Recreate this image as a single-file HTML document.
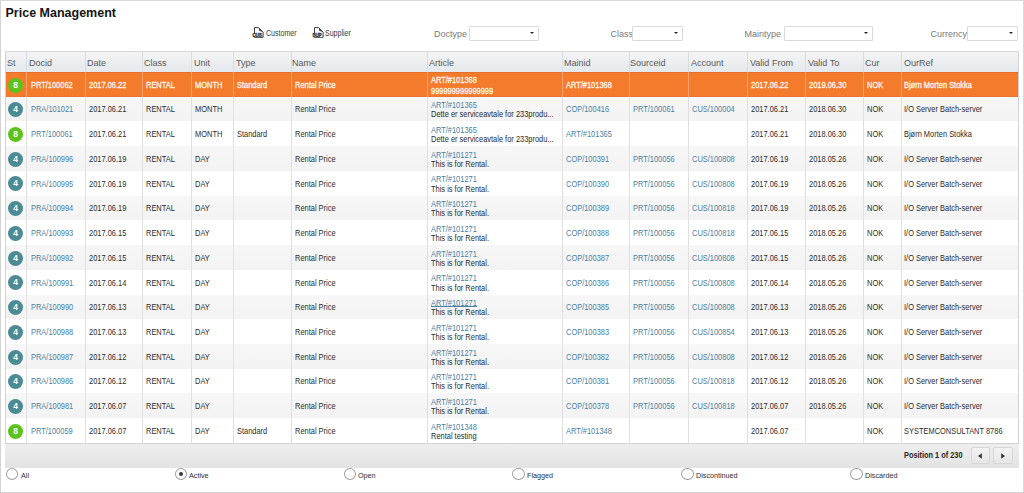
<!DOCTYPE html><html><head><meta charset="utf-8"><title>Price Management</title><style>
*{margin:0;padding:0;box-sizing:border-box}
html,body{width:1024px;height:493px;overflow:hidden;background:#fff;font-family:"Liberation Sans",sans-serif}
.a{position:absolute;white-space:nowrap;line-height:16px}
.title{font-size:12.5px;font-weight:bold;color:#151515}
.tb{font-size:8.6px;transform:scaleX(0.82);transform-origin:0 0;color:#3a3a3a}
.lbl{font-size:9px;color:#7a7a7a}
.dd{position:absolute;height:14px;border:1px solid #dadada;background:#fff;border-radius:1px}
.dd i{position:absolute;right:4px;top:4.5px;width:0;height:0;border-left:2.5px solid transparent;border-right:2.5px solid transparent;border-top:2.5px solid #222}
.hdr{font-size:9.6px;transform:scaleX(0.94);transform-origin:0 0;color:#595959}
.cell{font-size:8.2px;transform:scaleX(0.91);transform-origin:0 0;color:#2b2b2b}
.lnk{color:#4a80a2}
.sel{color:#fff5ea;-webkit-text-stroke:0.3px #fff5ea}
.badge{position:absolute;width:15px;height:15px;border-radius:50%;color:#fff;font-weight:bold;font-size:8.5px;line-height:15px;text-align:center}
.g{background:#5dc31c}
.t{background:#4c8a94}
.vl{position:absolute;width:1px}
.radio{position:absolute;width:12.4px;height:12px;border:1.2px solid #a0a0a0;border-radius:50%;background:#fff}
.rl{font-size:8px;transform:scaleX(0.9);transform-origin:0 0;color:#2e2e2e}
.pos{font-size:8.4px;transform:scaleX(0.88);transform-origin:0 0;font-weight:bold;color:#262626}
.btn{position:absolute;width:19px;height:16.5px;border:1px solid #d6d6d6;background:linear-gradient(#f3f3f3,#e6e6e6);border-radius:2px}
</style></head><body>
<div class="a" style="left:0;top:0;width:1024px;height:1px;background:#d9d9d9"></div>
<div class="a" style="left:0;top:0;width:1px;height:493px;background:#d3d3d3"></div>
<div class="a" style="left:1023px;top:0;width:1px;height:493px;background:#d9d9d9"></div>
<div class="a" style="left:0;top:492px;width:1024px;height:1px;background:#d3d3d3"></div>
<div class="a title" style="left:5.50px;top:4.90px">Price Management</div>
<svg class="a" style="left:250.5px;top:25.5px" width="14" height="13" viewBox="0 0 14 13"><path d="M3.5 1.6 H7.6 L12.1 6 V11.3 H3.5 Z" fill="#fff" stroke="#3c3c3c" stroke-width="1"/><path d="M7.8 2 L8.2 4.8 L11.6 5.9 Z" fill="#3c3c3c"/><rect x="1" y="7.3" width="10" height="3.6" fill="#fff"/><text x="6" y="10.9" font-size="4.6" text-anchor="middle" font-family="Liberation Sans" font-weight="bold" fill="none" stroke="#3a3a3a" stroke-width="0.55" letter-spacing="-0.2">CUS</text></svg>
<div class="a tb" style="left:265.50px;top:25.00px">Customer</div>
<svg class="a" style="left:310.5px;top:25.5px" width="14" height="13" viewBox="0 0 14 13"><path d="M3.5 1.6 H7.6 L12.1 6 V11.3 H3.5 Z" fill="#fff" stroke="#3c3c3c" stroke-width="1"/><path d="M7.8 2 L8.2 4.8 L11.6 5.9 Z" fill="#3c3c3c"/><rect x="1" y="7.3" width="10" height="3.6" fill="#fff"/><text x="6" y="10.9" font-size="4.6" text-anchor="middle" font-family="Liberation Sans" font-weight="bold" fill="none" stroke="#3a3a3a" stroke-width="0.55" letter-spacing="-0.2">SUP</text></svg>
<div class="a tb" style="left:325.20px;top:25.00px">Supplier</div>
<div class="a lbl" style="left:434.00px;top:25.60px">Doctype</div>
<div class="dd" style="left:468.5px;top:26.2px;width:70px;height:14.4px"><i></i></div>
<div class="a lbl" style="left:610.50px;top:25.60px">Class</div>
<div class="dd" style="left:632.3px;top:26.2px;width:50.5px;height:14.4px"><i></i></div>
<div class="a lbl" style="left:744.50px;top:25.60px">Maintype</div>
<div class="dd" style="left:784.2px;top:26.2px;width:88.4px;height:14.4px"><i></i></div>
<div class="a lbl" style="left:930.50px;top:25.60px">Currency</div>
<div class="dd" style="left:967.3px;top:26.2px;width:51px;height:14.4px"><i></i></div>
<div class="a" style="left:5px;top:51px;width:1014px;height:21px;background:linear-gradient(#f4f4f4,#e4e8ec);border-top:1px solid #d6d6d6"></div>
<div class="vl" style="left:26px;top:52px;height:20px;background:#d8dde3"></div>
<div class="vl" style="left:85px;top:52px;height:20px;background:#d8dde3"></div>
<div class="vl" style="left:142px;top:52px;height:20px;background:#d8dde3"></div>
<div class="vl" style="left:191px;top:52px;height:20px;background:#d8dde3"></div>
<div class="vl" style="left:233px;top:52px;height:20px;background:#d8dde3"></div>
<div class="vl" style="left:291px;top:52px;height:20px;background:#d8dde3"></div>
<div class="vl" style="left:427px;top:52px;height:20px;background:#d8dde3"></div>
<div class="vl" style="left:562px;top:52px;height:20px;background:#d8dde3"></div>
<div class="vl" style="left:629px;top:52px;height:20px;background:#d8dde3"></div>
<div class="vl" style="left:688px;top:52px;height:20px;background:#d8dde3"></div>
<div class="vl" style="left:747px;top:52px;height:20px;background:#d8dde3"></div>
<div class="vl" style="left:805px;top:52px;height:20px;background:#d8dde3"></div>
<div class="vl" style="left:863px;top:52px;height:20px;background:#d8dde3"></div>
<div class="vl" style="left:901px;top:52px;height:20px;background:#d8dde3"></div>
<div class="a hdr" style="left:6.60px;top:54.80px">St</div>
<div class="a hdr" style="left:28.60px;top:54.80px">Docid</div>
<div class="a hdr" style="left:86.60px;top:54.80px">Date</div>
<div class="a hdr" style="left:144.20px;top:54.80px">Class</div>
<div class="a hdr" style="left:193.60px;top:54.80px">Unit</div>
<div class="a hdr" style="left:235.60px;top:54.80px">Type</div>
<div class="a hdr" style="left:292.40px;top:54.80px">Name</div>
<div class="a hdr" style="left:428.60px;top:54.80px">Article</div>
<div class="a hdr" style="left:564.20px;top:54.80px">Mainid</div>
<div class="a hdr" style="left:630.40px;top:54.80px">Sourceid</div>
<div class="a hdr" style="left:690.60px;top:54.80px">Account</div>
<div class="a hdr" style="left:749.60px;top:54.80px">Valid From</div>
<div class="a hdr" style="left:807.60px;top:54.80px">Valid To</div>
<div class="a hdr" style="left:865.00px;top:54.80px">Cur</div>
<div class="a hdr" style="left:903.60px;top:54.80px">OurRef</div>
<div class="a" style="left:5px;top:72.00px;width:1014px;height:24.74px;background:#f47a2c"></div>
<div class="a" style="left:5px;top:72.00px;width:1014px;height:1px;background:#e2702c"></div>
<div class="a" style="left:5px;top:95.73px;width:1014px;height:1px;background:#ea7431"></div>
<div class="vl" style="left:26px;top:72.00px;height:24.74px;background:#f9a26a"></div>
<div class="vl" style="left:85px;top:72.00px;height:24.74px;background:#f9a26a"></div>
<div class="vl" style="left:142px;top:72.00px;height:24.74px;background:#f9a26a"></div>
<div class="vl" style="left:191px;top:72.00px;height:24.74px;background:#f9a26a"></div>
<div class="vl" style="left:233px;top:72.00px;height:24.74px;background:#f9a26a"></div>
<div class="vl" style="left:291px;top:72.00px;height:24.74px;background:#f9a26a"></div>
<div class="vl" style="left:427px;top:72.00px;height:24.74px;background:#f9a26a"></div>
<div class="vl" style="left:562px;top:72.00px;height:24.74px;background:#f9a26a"></div>
<div class="vl" style="left:629px;top:72.00px;height:24.74px;background:#f9a26a"></div>
<div class="vl" style="left:688px;top:72.00px;height:24.74px;background:#f9a26a"></div>
<div class="vl" style="left:747px;top:72.00px;height:24.74px;background:#f9a26a"></div>
<div class="vl" style="left:805px;top:72.00px;height:24.74px;background:#f9a26a"></div>
<div class="vl" style="left:863px;top:72.00px;height:24.74px;background:#f9a26a"></div>
<div class="vl" style="left:901px;top:72.00px;height:24.74px;background:#f9a26a"></div>
<div class="a" style="left:5px;top:96.73px;width:1014px;height:24.74px;background:linear-gradient(#f7f7f7,#f3f3f3)"></div>
<div class="vl" style="left:26px;top:96.73px;height:24.74px;background:#e0e0e0"></div>
<div class="vl" style="left:85px;top:96.73px;height:24.74px;background:#e0e0e0"></div>
<div class="vl" style="left:142px;top:96.73px;height:24.74px;background:#e0e0e0"></div>
<div class="vl" style="left:191px;top:96.73px;height:24.74px;background:#e0e0e0"></div>
<div class="vl" style="left:233px;top:96.73px;height:24.74px;background:#e0e0e0"></div>
<div class="vl" style="left:291px;top:96.73px;height:24.74px;background:#e0e0e0"></div>
<div class="vl" style="left:427px;top:96.73px;height:24.74px;background:#e0e0e0"></div>
<div class="vl" style="left:562px;top:96.73px;height:24.74px;background:#e0e0e0"></div>
<div class="vl" style="left:629px;top:96.73px;height:24.74px;background:#e0e0e0"></div>
<div class="vl" style="left:688px;top:96.73px;height:24.74px;background:#e0e0e0"></div>
<div class="vl" style="left:747px;top:96.73px;height:24.74px;background:#e0e0e0"></div>
<div class="vl" style="left:805px;top:96.73px;height:24.74px;background:#e0e0e0"></div>
<div class="vl" style="left:863px;top:96.73px;height:24.74px;background:#e0e0e0"></div>
<div class="vl" style="left:901px;top:96.73px;height:24.74px;background:#e0e0e0"></div>
<div class="a" style="left:5px;top:121.46px;width:1014px;height:24.74px;background:#ffffff"></div>
<div class="vl" style="left:26px;top:121.46px;height:24.74px;background:#e0e0e0"></div>
<div class="vl" style="left:85px;top:121.46px;height:24.74px;background:#e0e0e0"></div>
<div class="vl" style="left:142px;top:121.46px;height:24.74px;background:#e0e0e0"></div>
<div class="vl" style="left:191px;top:121.46px;height:24.74px;background:#e0e0e0"></div>
<div class="vl" style="left:233px;top:121.46px;height:24.74px;background:#e0e0e0"></div>
<div class="vl" style="left:291px;top:121.46px;height:24.74px;background:#e0e0e0"></div>
<div class="vl" style="left:427px;top:121.46px;height:24.74px;background:#e0e0e0"></div>
<div class="vl" style="left:562px;top:121.46px;height:24.74px;background:#e0e0e0"></div>
<div class="vl" style="left:629px;top:121.46px;height:24.74px;background:#e0e0e0"></div>
<div class="vl" style="left:688px;top:121.46px;height:24.74px;background:#e0e0e0"></div>
<div class="vl" style="left:747px;top:121.46px;height:24.74px;background:#e0e0e0"></div>
<div class="vl" style="left:805px;top:121.46px;height:24.74px;background:#e0e0e0"></div>
<div class="vl" style="left:863px;top:121.46px;height:24.74px;background:#e0e0e0"></div>
<div class="vl" style="left:901px;top:121.46px;height:24.74px;background:#e0e0e0"></div>
<div class="a" style="left:5px;top:146.19px;width:1014px;height:24.74px;background:linear-gradient(#f7f7f7,#f3f3f3)"></div>
<div class="vl" style="left:26px;top:146.19px;height:24.74px;background:#e0e0e0"></div>
<div class="vl" style="left:85px;top:146.19px;height:24.74px;background:#e0e0e0"></div>
<div class="vl" style="left:142px;top:146.19px;height:24.74px;background:#e0e0e0"></div>
<div class="vl" style="left:191px;top:146.19px;height:24.74px;background:#e0e0e0"></div>
<div class="vl" style="left:233px;top:146.19px;height:24.74px;background:#e0e0e0"></div>
<div class="vl" style="left:291px;top:146.19px;height:24.74px;background:#e0e0e0"></div>
<div class="vl" style="left:427px;top:146.19px;height:24.74px;background:#e0e0e0"></div>
<div class="vl" style="left:562px;top:146.19px;height:24.74px;background:#e0e0e0"></div>
<div class="vl" style="left:629px;top:146.19px;height:24.74px;background:#e0e0e0"></div>
<div class="vl" style="left:688px;top:146.19px;height:24.74px;background:#e0e0e0"></div>
<div class="vl" style="left:747px;top:146.19px;height:24.74px;background:#e0e0e0"></div>
<div class="vl" style="left:805px;top:146.19px;height:24.74px;background:#e0e0e0"></div>
<div class="vl" style="left:863px;top:146.19px;height:24.74px;background:#e0e0e0"></div>
<div class="vl" style="left:901px;top:146.19px;height:24.74px;background:#e0e0e0"></div>
<div class="a" style="left:5px;top:170.92px;width:1014px;height:24.74px;background:#ffffff"></div>
<div class="vl" style="left:26px;top:170.92px;height:24.74px;background:#e0e0e0"></div>
<div class="vl" style="left:85px;top:170.92px;height:24.74px;background:#e0e0e0"></div>
<div class="vl" style="left:142px;top:170.92px;height:24.74px;background:#e0e0e0"></div>
<div class="vl" style="left:191px;top:170.92px;height:24.74px;background:#e0e0e0"></div>
<div class="vl" style="left:233px;top:170.92px;height:24.74px;background:#e0e0e0"></div>
<div class="vl" style="left:291px;top:170.92px;height:24.74px;background:#e0e0e0"></div>
<div class="vl" style="left:427px;top:170.92px;height:24.74px;background:#e0e0e0"></div>
<div class="vl" style="left:562px;top:170.92px;height:24.74px;background:#e0e0e0"></div>
<div class="vl" style="left:629px;top:170.92px;height:24.74px;background:#e0e0e0"></div>
<div class="vl" style="left:688px;top:170.92px;height:24.74px;background:#e0e0e0"></div>
<div class="vl" style="left:747px;top:170.92px;height:24.74px;background:#e0e0e0"></div>
<div class="vl" style="left:805px;top:170.92px;height:24.74px;background:#e0e0e0"></div>
<div class="vl" style="left:863px;top:170.92px;height:24.74px;background:#e0e0e0"></div>
<div class="vl" style="left:901px;top:170.92px;height:24.74px;background:#e0e0e0"></div>
<div class="a" style="left:5px;top:195.65px;width:1014px;height:24.74px;background:linear-gradient(#f7f7f7,#f3f3f3)"></div>
<div class="vl" style="left:26px;top:195.65px;height:24.74px;background:#e0e0e0"></div>
<div class="vl" style="left:85px;top:195.65px;height:24.74px;background:#e0e0e0"></div>
<div class="vl" style="left:142px;top:195.65px;height:24.74px;background:#e0e0e0"></div>
<div class="vl" style="left:191px;top:195.65px;height:24.74px;background:#e0e0e0"></div>
<div class="vl" style="left:233px;top:195.65px;height:24.74px;background:#e0e0e0"></div>
<div class="vl" style="left:291px;top:195.65px;height:24.74px;background:#e0e0e0"></div>
<div class="vl" style="left:427px;top:195.65px;height:24.74px;background:#e0e0e0"></div>
<div class="vl" style="left:562px;top:195.65px;height:24.74px;background:#e0e0e0"></div>
<div class="vl" style="left:629px;top:195.65px;height:24.74px;background:#e0e0e0"></div>
<div class="vl" style="left:688px;top:195.65px;height:24.74px;background:#e0e0e0"></div>
<div class="vl" style="left:747px;top:195.65px;height:24.74px;background:#e0e0e0"></div>
<div class="vl" style="left:805px;top:195.65px;height:24.74px;background:#e0e0e0"></div>
<div class="vl" style="left:863px;top:195.65px;height:24.74px;background:#e0e0e0"></div>
<div class="vl" style="left:901px;top:195.65px;height:24.74px;background:#e0e0e0"></div>
<div class="a" style="left:5px;top:220.38px;width:1014px;height:24.74px;background:#ffffff"></div>
<div class="vl" style="left:26px;top:220.38px;height:24.74px;background:#e0e0e0"></div>
<div class="vl" style="left:85px;top:220.38px;height:24.74px;background:#e0e0e0"></div>
<div class="vl" style="left:142px;top:220.38px;height:24.74px;background:#e0e0e0"></div>
<div class="vl" style="left:191px;top:220.38px;height:24.74px;background:#e0e0e0"></div>
<div class="vl" style="left:233px;top:220.38px;height:24.74px;background:#e0e0e0"></div>
<div class="vl" style="left:291px;top:220.38px;height:24.74px;background:#e0e0e0"></div>
<div class="vl" style="left:427px;top:220.38px;height:24.74px;background:#e0e0e0"></div>
<div class="vl" style="left:562px;top:220.38px;height:24.74px;background:#e0e0e0"></div>
<div class="vl" style="left:629px;top:220.38px;height:24.74px;background:#e0e0e0"></div>
<div class="vl" style="left:688px;top:220.38px;height:24.74px;background:#e0e0e0"></div>
<div class="vl" style="left:747px;top:220.38px;height:24.74px;background:#e0e0e0"></div>
<div class="vl" style="left:805px;top:220.38px;height:24.74px;background:#e0e0e0"></div>
<div class="vl" style="left:863px;top:220.38px;height:24.74px;background:#e0e0e0"></div>
<div class="vl" style="left:901px;top:220.38px;height:24.74px;background:#e0e0e0"></div>
<div class="a" style="left:5px;top:245.11px;width:1014px;height:24.74px;background:linear-gradient(#f7f7f7,#f3f3f3)"></div>
<div class="vl" style="left:26px;top:245.11px;height:24.74px;background:#e0e0e0"></div>
<div class="vl" style="left:85px;top:245.11px;height:24.74px;background:#e0e0e0"></div>
<div class="vl" style="left:142px;top:245.11px;height:24.74px;background:#e0e0e0"></div>
<div class="vl" style="left:191px;top:245.11px;height:24.74px;background:#e0e0e0"></div>
<div class="vl" style="left:233px;top:245.11px;height:24.74px;background:#e0e0e0"></div>
<div class="vl" style="left:291px;top:245.11px;height:24.74px;background:#e0e0e0"></div>
<div class="vl" style="left:427px;top:245.11px;height:24.74px;background:#e0e0e0"></div>
<div class="vl" style="left:562px;top:245.11px;height:24.74px;background:#e0e0e0"></div>
<div class="vl" style="left:629px;top:245.11px;height:24.74px;background:#e0e0e0"></div>
<div class="vl" style="left:688px;top:245.11px;height:24.74px;background:#e0e0e0"></div>
<div class="vl" style="left:747px;top:245.11px;height:24.74px;background:#e0e0e0"></div>
<div class="vl" style="left:805px;top:245.11px;height:24.74px;background:#e0e0e0"></div>
<div class="vl" style="left:863px;top:245.11px;height:24.74px;background:#e0e0e0"></div>
<div class="vl" style="left:901px;top:245.11px;height:24.74px;background:#e0e0e0"></div>
<div class="a" style="left:5px;top:269.84px;width:1014px;height:24.74px;background:#ffffff"></div>
<div class="vl" style="left:26px;top:269.84px;height:24.74px;background:#e0e0e0"></div>
<div class="vl" style="left:85px;top:269.84px;height:24.74px;background:#e0e0e0"></div>
<div class="vl" style="left:142px;top:269.84px;height:24.74px;background:#e0e0e0"></div>
<div class="vl" style="left:191px;top:269.84px;height:24.74px;background:#e0e0e0"></div>
<div class="vl" style="left:233px;top:269.84px;height:24.74px;background:#e0e0e0"></div>
<div class="vl" style="left:291px;top:269.84px;height:24.74px;background:#e0e0e0"></div>
<div class="vl" style="left:427px;top:269.84px;height:24.74px;background:#e0e0e0"></div>
<div class="vl" style="left:562px;top:269.84px;height:24.74px;background:#e0e0e0"></div>
<div class="vl" style="left:629px;top:269.84px;height:24.74px;background:#e0e0e0"></div>
<div class="vl" style="left:688px;top:269.84px;height:24.74px;background:#e0e0e0"></div>
<div class="vl" style="left:747px;top:269.84px;height:24.74px;background:#e0e0e0"></div>
<div class="vl" style="left:805px;top:269.84px;height:24.74px;background:#e0e0e0"></div>
<div class="vl" style="left:863px;top:269.84px;height:24.74px;background:#e0e0e0"></div>
<div class="vl" style="left:901px;top:269.84px;height:24.74px;background:#e0e0e0"></div>
<div class="a" style="left:5px;top:294.57px;width:1014px;height:24.74px;background:linear-gradient(#f7f7f7,#f3f3f3)"></div>
<div class="vl" style="left:26px;top:294.57px;height:24.74px;background:#e0e0e0"></div>
<div class="vl" style="left:85px;top:294.57px;height:24.74px;background:#e0e0e0"></div>
<div class="vl" style="left:142px;top:294.57px;height:24.74px;background:#e0e0e0"></div>
<div class="vl" style="left:191px;top:294.57px;height:24.74px;background:#e0e0e0"></div>
<div class="vl" style="left:233px;top:294.57px;height:24.74px;background:#e0e0e0"></div>
<div class="vl" style="left:291px;top:294.57px;height:24.74px;background:#e0e0e0"></div>
<div class="vl" style="left:427px;top:294.57px;height:24.74px;background:#e0e0e0"></div>
<div class="vl" style="left:562px;top:294.57px;height:24.74px;background:#e0e0e0"></div>
<div class="vl" style="left:629px;top:294.57px;height:24.74px;background:#e0e0e0"></div>
<div class="vl" style="left:688px;top:294.57px;height:24.74px;background:#e0e0e0"></div>
<div class="vl" style="left:747px;top:294.57px;height:24.74px;background:#e0e0e0"></div>
<div class="vl" style="left:805px;top:294.57px;height:24.74px;background:#e0e0e0"></div>
<div class="vl" style="left:863px;top:294.57px;height:24.74px;background:#e0e0e0"></div>
<div class="vl" style="left:901px;top:294.57px;height:24.74px;background:#e0e0e0"></div>
<div class="a" style="left:5px;top:319.30px;width:1014px;height:24.74px;background:#ffffff"></div>
<div class="vl" style="left:26px;top:319.30px;height:24.74px;background:#e0e0e0"></div>
<div class="vl" style="left:85px;top:319.30px;height:24.74px;background:#e0e0e0"></div>
<div class="vl" style="left:142px;top:319.30px;height:24.74px;background:#e0e0e0"></div>
<div class="vl" style="left:191px;top:319.30px;height:24.74px;background:#e0e0e0"></div>
<div class="vl" style="left:233px;top:319.30px;height:24.74px;background:#e0e0e0"></div>
<div class="vl" style="left:291px;top:319.30px;height:24.74px;background:#e0e0e0"></div>
<div class="vl" style="left:427px;top:319.30px;height:24.74px;background:#e0e0e0"></div>
<div class="vl" style="left:562px;top:319.30px;height:24.74px;background:#e0e0e0"></div>
<div class="vl" style="left:629px;top:319.30px;height:24.74px;background:#e0e0e0"></div>
<div class="vl" style="left:688px;top:319.30px;height:24.74px;background:#e0e0e0"></div>
<div class="vl" style="left:747px;top:319.30px;height:24.74px;background:#e0e0e0"></div>
<div class="vl" style="left:805px;top:319.30px;height:24.74px;background:#e0e0e0"></div>
<div class="vl" style="left:863px;top:319.30px;height:24.74px;background:#e0e0e0"></div>
<div class="vl" style="left:901px;top:319.30px;height:24.74px;background:#e0e0e0"></div>
<div class="a" style="left:5px;top:344.03px;width:1014px;height:24.74px;background:linear-gradient(#f7f7f7,#f3f3f3)"></div>
<div class="vl" style="left:26px;top:344.03px;height:24.74px;background:#e0e0e0"></div>
<div class="vl" style="left:85px;top:344.03px;height:24.74px;background:#e0e0e0"></div>
<div class="vl" style="left:142px;top:344.03px;height:24.74px;background:#e0e0e0"></div>
<div class="vl" style="left:191px;top:344.03px;height:24.74px;background:#e0e0e0"></div>
<div class="vl" style="left:233px;top:344.03px;height:24.74px;background:#e0e0e0"></div>
<div class="vl" style="left:291px;top:344.03px;height:24.74px;background:#e0e0e0"></div>
<div class="vl" style="left:427px;top:344.03px;height:24.74px;background:#e0e0e0"></div>
<div class="vl" style="left:562px;top:344.03px;height:24.74px;background:#e0e0e0"></div>
<div class="vl" style="left:629px;top:344.03px;height:24.74px;background:#e0e0e0"></div>
<div class="vl" style="left:688px;top:344.03px;height:24.74px;background:#e0e0e0"></div>
<div class="vl" style="left:747px;top:344.03px;height:24.74px;background:#e0e0e0"></div>
<div class="vl" style="left:805px;top:344.03px;height:24.74px;background:#e0e0e0"></div>
<div class="vl" style="left:863px;top:344.03px;height:24.74px;background:#e0e0e0"></div>
<div class="vl" style="left:901px;top:344.03px;height:24.74px;background:#e0e0e0"></div>
<div class="a" style="left:5px;top:368.76px;width:1014px;height:24.74px;background:#ffffff"></div>
<div class="vl" style="left:26px;top:368.76px;height:24.74px;background:#e0e0e0"></div>
<div class="vl" style="left:85px;top:368.76px;height:24.74px;background:#e0e0e0"></div>
<div class="vl" style="left:142px;top:368.76px;height:24.74px;background:#e0e0e0"></div>
<div class="vl" style="left:191px;top:368.76px;height:24.74px;background:#e0e0e0"></div>
<div class="vl" style="left:233px;top:368.76px;height:24.74px;background:#e0e0e0"></div>
<div class="vl" style="left:291px;top:368.76px;height:24.74px;background:#e0e0e0"></div>
<div class="vl" style="left:427px;top:368.76px;height:24.74px;background:#e0e0e0"></div>
<div class="vl" style="left:562px;top:368.76px;height:24.74px;background:#e0e0e0"></div>
<div class="vl" style="left:629px;top:368.76px;height:24.74px;background:#e0e0e0"></div>
<div class="vl" style="left:688px;top:368.76px;height:24.74px;background:#e0e0e0"></div>
<div class="vl" style="left:747px;top:368.76px;height:24.74px;background:#e0e0e0"></div>
<div class="vl" style="left:805px;top:368.76px;height:24.74px;background:#e0e0e0"></div>
<div class="vl" style="left:863px;top:368.76px;height:24.74px;background:#e0e0e0"></div>
<div class="vl" style="left:901px;top:368.76px;height:24.74px;background:#e0e0e0"></div>
<div class="a" style="left:5px;top:393.49px;width:1014px;height:24.74px;background:linear-gradient(#f7f7f7,#f3f3f3)"></div>
<div class="vl" style="left:26px;top:393.49px;height:24.74px;background:#e0e0e0"></div>
<div class="vl" style="left:85px;top:393.49px;height:24.74px;background:#e0e0e0"></div>
<div class="vl" style="left:142px;top:393.49px;height:24.74px;background:#e0e0e0"></div>
<div class="vl" style="left:191px;top:393.49px;height:24.74px;background:#e0e0e0"></div>
<div class="vl" style="left:233px;top:393.49px;height:24.74px;background:#e0e0e0"></div>
<div class="vl" style="left:291px;top:393.49px;height:24.74px;background:#e0e0e0"></div>
<div class="vl" style="left:427px;top:393.49px;height:24.74px;background:#e0e0e0"></div>
<div class="vl" style="left:562px;top:393.49px;height:24.74px;background:#e0e0e0"></div>
<div class="vl" style="left:629px;top:393.49px;height:24.74px;background:#e0e0e0"></div>
<div class="vl" style="left:688px;top:393.49px;height:24.74px;background:#e0e0e0"></div>
<div class="vl" style="left:747px;top:393.49px;height:24.74px;background:#e0e0e0"></div>
<div class="vl" style="left:805px;top:393.49px;height:24.74px;background:#e0e0e0"></div>
<div class="vl" style="left:863px;top:393.49px;height:24.74px;background:#e0e0e0"></div>
<div class="vl" style="left:901px;top:393.49px;height:24.74px;background:#e0e0e0"></div>
<div class="a" style="left:5px;top:418.22px;width:1014px;height:24.74px;background:#ffffff"></div>
<div class="vl" style="left:26px;top:418.22px;height:24.74px;background:#e0e0e0"></div>
<div class="vl" style="left:85px;top:418.22px;height:24.74px;background:#e0e0e0"></div>
<div class="vl" style="left:142px;top:418.22px;height:24.74px;background:#e0e0e0"></div>
<div class="vl" style="left:191px;top:418.22px;height:24.74px;background:#e0e0e0"></div>
<div class="vl" style="left:233px;top:418.22px;height:24.74px;background:#e0e0e0"></div>
<div class="vl" style="left:291px;top:418.22px;height:24.74px;background:#e0e0e0"></div>
<div class="vl" style="left:427px;top:418.22px;height:24.74px;background:#e0e0e0"></div>
<div class="vl" style="left:562px;top:418.22px;height:24.74px;background:#e0e0e0"></div>
<div class="vl" style="left:629px;top:418.22px;height:24.74px;background:#e0e0e0"></div>
<div class="vl" style="left:688px;top:418.22px;height:24.74px;background:#e0e0e0"></div>
<div class="vl" style="left:747px;top:418.22px;height:24.74px;background:#e0e0e0"></div>
<div class="vl" style="left:805px;top:418.22px;height:24.74px;background:#e0e0e0"></div>
<div class="vl" style="left:863px;top:418.22px;height:24.74px;background:#e0e0e0"></div>
<div class="vl" style="left:901px;top:418.22px;height:24.74px;background:#e0e0e0"></div>
<div class="vl" style="left:5px;top:51px;height:416.50px;background:#d2d2d2"></div>
<div class="vl" style="left:1018px;top:51px;height:416.50px;background:#d2d2d2"></div>
<div class="badge g" style="left:8.2px;top:77.56px">8</div>
<div class="a cell sel" style="left:31.20px;top:77.66px">PRT/100062</div>
<div class="a cell sel" style="left:89.00px;top:77.66px">2017.06.22</div>
<div class="a cell sel" style="left:146.20px;top:77.66px">RENTAL</div>
<div class="a cell sel" style="left:195.20px;top:77.66px">MONTH</div>
<div class="a cell sel" style="left:237.20px;top:77.66px">Standard</div>
<div class="a cell sel" style="left:295.20px;top:77.66px">Rental Price</div>
<div class="a cell sel" style="left:566.20px;top:77.66px">ART/#101368</div>
<div class="a cell sel" style="left:751.20px;top:77.66px">2017.06.22</div>
<div class="a cell sel" style="left:809.20px;top:77.66px">2019.06.30</div>
<div class="a cell sel" style="left:867.00px;top:77.66px">NOK</div>
<div class="a cell sel" style="left:904.20px;top:77.66px">Bjørn Morten Stokka</div>
<div class="a cell sel" style="left:431.00px;top:73.46px">ART/#101368</div>
<div class="a cell sel" style="left:431.00px;top:84.16px">999999999999999</div>
<div class="badge t" style="left:8.2px;top:102.30px">4</div>
<div class="a cell lnk" style="left:31.20px;top:102.39px">PRA/101021</div>
<div class="a cell" style="left:89.00px;top:102.39px">2017.06.21</div>
<div class="a cell" style="left:146.20px;top:102.39px">RENTAL</div>
<div class="a cell" style="left:195.20px;top:102.39px">MONTH</div>
<div class="a cell" style="left:295.20px;top:102.39px">Rental Price</div>
<div class="a cell lnk" style="left:566.20px;top:102.39px">COP/100416</div>
<div class="a cell lnk" style="left:633.20px;top:102.39px">PRT/100061</div>
<div class="a cell lnk" style="left:692.20px;top:102.39px">CUS/100004</div>
<div class="a cell" style="left:751.20px;top:102.39px">2017.06.21</div>
<div class="a cell" style="left:809.20px;top:102.39px">2018.06.30</div>
<div class="a cell" style="left:867.00px;top:102.39px">NOK</div>
<div class="a cell" style="left:904.20px;top:102.39px">I/O Server Batch-server</div>
<div class="a cell lnk" style="left:431.00px;top:98.19px">ART/#101365</div>
<div class="a cell" style="left:431.00px;top:107.39px">Dette er serviceavtale for 233produ...</div>
<div class="badge g" style="left:8.2px;top:127.03px">8</div>
<div class="a cell lnk" style="left:31.20px;top:127.13px">PRT/100061</div>
<div class="a cell" style="left:89.00px;top:127.13px">2017.06.21</div>
<div class="a cell" style="left:146.20px;top:127.13px">RENTAL</div>
<div class="a cell" style="left:195.20px;top:127.13px">MONTH</div>
<div class="a cell" style="left:237.20px;top:127.13px">Standard</div>
<div class="a cell" style="left:295.20px;top:127.13px">Rental Price</div>
<div class="a cell lnk" style="left:566.20px;top:127.13px">ART/#101365</div>
<div class="a cell" style="left:751.20px;top:127.13px">2017.06.21</div>
<div class="a cell" style="left:809.20px;top:127.13px">2018.06.30</div>
<div class="a cell" style="left:867.00px;top:127.13px">NOK</div>
<div class="a cell" style="left:904.20px;top:127.13px">Bjørn Morten Stokka</div>
<div class="a cell lnk" style="left:431.00px;top:122.93px">ART/#101365</div>
<div class="a cell" style="left:431.00px;top:132.13px">Dette er serviceavtale for 233produ...</div>
<div class="badge t" style="left:8.2px;top:151.75px">4</div>
<div class="a cell lnk" style="left:31.20px;top:151.86px">PRA/100996</div>
<div class="a cell" style="left:89.00px;top:151.86px">2017.06.19</div>
<div class="a cell" style="left:146.20px;top:151.86px">RENTAL</div>
<div class="a cell" style="left:195.20px;top:151.86px">DAY</div>
<div class="a cell" style="left:295.20px;top:151.86px">Rental Price</div>
<div class="a cell lnk" style="left:566.20px;top:151.86px">COP/100391</div>
<div class="a cell lnk" style="left:633.20px;top:151.86px">PRT/100056</div>
<div class="a cell lnk" style="left:692.20px;top:151.86px">CUS/100808</div>
<div class="a cell" style="left:751.20px;top:151.86px">2017.06.19</div>
<div class="a cell" style="left:809.20px;top:151.86px">2018.05.26</div>
<div class="a cell" style="left:867.00px;top:151.86px">NOK</div>
<div class="a cell" style="left:904.20px;top:151.86px">I/O Server Batch-server</div>
<div class="a cell lnk" style="left:431.00px;top:147.66px">ART/#101271</div>
<div class="a cell" style="left:431.00px;top:156.86px">This is for Rental.</div>
<div class="badge t" style="left:8.2px;top:176.49px">4</div>
<div class="a cell lnk" style="left:31.20px;top:176.59px">PRA/100995</div>
<div class="a cell" style="left:89.00px;top:176.59px">2017.06.19</div>
<div class="a cell" style="left:146.20px;top:176.59px">RENTAL</div>
<div class="a cell" style="left:195.20px;top:176.59px">DAY</div>
<div class="a cell" style="left:295.20px;top:176.59px">Rental Price</div>
<div class="a cell lnk" style="left:566.20px;top:176.59px">COP/100390</div>
<div class="a cell lnk" style="left:633.20px;top:176.59px">PRT/100056</div>
<div class="a cell lnk" style="left:692.20px;top:176.59px">CUS/100808</div>
<div class="a cell" style="left:751.20px;top:176.59px">2017.06.19</div>
<div class="a cell" style="left:809.20px;top:176.59px">2018.05.26</div>
<div class="a cell" style="left:867.00px;top:176.59px">NOK</div>
<div class="a cell" style="left:904.20px;top:176.59px">I/O Server Batch-server</div>
<div class="a cell lnk" style="left:431.00px;top:172.39px">ART/#101271</div>
<div class="a cell" style="left:431.00px;top:181.59px">This is for Rental.</div>
<div class="badge t" style="left:8.2px;top:201.22px">4</div>
<div class="a cell lnk" style="left:31.20px;top:201.32px">PRA/100994</div>
<div class="a cell" style="left:89.00px;top:201.32px">2017.06.19</div>
<div class="a cell" style="left:146.20px;top:201.32px">RENTAL</div>
<div class="a cell" style="left:195.20px;top:201.32px">DAY</div>
<div class="a cell" style="left:295.20px;top:201.32px">Rental Price</div>
<div class="a cell lnk" style="left:566.20px;top:201.32px">COP/100389</div>
<div class="a cell lnk" style="left:633.20px;top:201.32px">PRT/100056</div>
<div class="a cell lnk" style="left:692.20px;top:201.32px">CUS/100818</div>
<div class="a cell" style="left:751.20px;top:201.32px">2017.06.19</div>
<div class="a cell" style="left:809.20px;top:201.32px">2018.05.26</div>
<div class="a cell" style="left:867.00px;top:201.32px">NOK</div>
<div class="a cell" style="left:904.20px;top:201.32px">I/O Server Batch-server</div>
<div class="a cell lnk" style="left:431.00px;top:197.12px">ART/#101271</div>
<div class="a cell" style="left:431.00px;top:206.32px">This is for Rental.</div>
<div class="badge t" style="left:8.2px;top:225.94px">4</div>
<div class="a cell lnk" style="left:31.20px;top:226.05px">PRA/100993</div>
<div class="a cell" style="left:89.00px;top:226.05px">2017.06.15</div>
<div class="a cell" style="left:146.20px;top:226.05px">RENTAL</div>
<div class="a cell" style="left:195.20px;top:226.05px">DAY</div>
<div class="a cell" style="left:295.20px;top:226.05px">Rental Price</div>
<div class="a cell lnk" style="left:566.20px;top:226.05px">COP/100388</div>
<div class="a cell lnk" style="left:633.20px;top:226.05px">PRT/100056</div>
<div class="a cell lnk" style="left:692.20px;top:226.05px">CUS/100818</div>
<div class="a cell" style="left:751.20px;top:226.05px">2017.06.15</div>
<div class="a cell" style="left:809.20px;top:226.05px">2018.05.26</div>
<div class="a cell" style="left:867.00px;top:226.05px">NOK</div>
<div class="a cell" style="left:904.20px;top:226.05px">I/O Server Batch-server</div>
<div class="a cell lnk" style="left:431.00px;top:221.85px">ART/#101271</div>
<div class="a cell" style="left:431.00px;top:231.05px">This is for Rental.</div>
<div class="badge t" style="left:8.2px;top:250.68px">4</div>
<div class="a cell lnk" style="left:31.20px;top:250.78px">PRA/100992</div>
<div class="a cell" style="left:89.00px;top:250.78px">2017.06.15</div>
<div class="a cell" style="left:146.20px;top:250.78px">RENTAL</div>
<div class="a cell" style="left:195.20px;top:250.78px">DAY</div>
<div class="a cell" style="left:295.20px;top:250.78px">Rental Price</div>
<div class="a cell lnk" style="left:566.20px;top:250.78px">COP/100387</div>
<div class="a cell lnk" style="left:633.20px;top:250.78px">PRT/100056</div>
<div class="a cell lnk" style="left:692.20px;top:250.78px">CUS/100808</div>
<div class="a cell" style="left:751.20px;top:250.78px">2017.06.15</div>
<div class="a cell" style="left:809.20px;top:250.78px">2018.05.26</div>
<div class="a cell" style="left:867.00px;top:250.78px">NOK</div>
<div class="a cell" style="left:904.20px;top:250.78px">I/O Server Batch-server</div>
<div class="a cell lnk" style="left:431.00px;top:246.58px">ART/#101271</div>
<div class="a cell" style="left:431.00px;top:255.78px">This is for Rental.</div>
<div class="badge t" style="left:8.2px;top:275.41px">4</div>
<div class="a cell lnk" style="left:31.20px;top:275.51px">PRA/100991</div>
<div class="a cell" style="left:89.00px;top:275.51px">2017.06.14</div>
<div class="a cell" style="left:146.20px;top:275.51px">RENTAL</div>
<div class="a cell" style="left:195.20px;top:275.51px">DAY</div>
<div class="a cell" style="left:295.20px;top:275.51px">Rental Price</div>
<div class="a cell lnk" style="left:566.20px;top:275.51px">COP/100386</div>
<div class="a cell lnk" style="left:633.20px;top:275.51px">PRT/100056</div>
<div class="a cell lnk" style="left:692.20px;top:275.51px">CUS/100808</div>
<div class="a cell" style="left:751.20px;top:275.51px">2017.06.14</div>
<div class="a cell" style="left:809.20px;top:275.51px">2018.05.26</div>
<div class="a cell" style="left:867.00px;top:275.51px">NOK</div>
<div class="a cell" style="left:904.20px;top:275.51px">I/O Server Batch-server</div>
<div class="a cell lnk" style="left:431.00px;top:271.31px">ART/#101271</div>
<div class="a cell" style="left:431.00px;top:280.51px">This is for Rental.</div>
<div class="badge t" style="left:8.2px;top:300.13px">4</div>
<div class="a cell lnk" style="left:31.20px;top:300.24px">PRA/100990</div>
<div class="a cell" style="left:89.00px;top:300.24px">2017.06.13</div>
<div class="a cell" style="left:146.20px;top:300.24px">RENTAL</div>
<div class="a cell" style="left:195.20px;top:300.24px">DAY</div>
<div class="a cell" style="left:295.20px;top:300.24px">Rental Price</div>
<div class="a cell lnk" style="left:566.20px;top:300.24px">COP/100385</div>
<div class="a cell lnk" style="left:633.20px;top:300.24px">PRT/100056</div>
<div class="a cell lnk" style="left:692.20px;top:300.24px">CUS/100808</div>
<div class="a cell" style="left:751.20px;top:300.24px">2017.06.13</div>
<div class="a cell" style="left:809.20px;top:300.24px">2018.05.26</div>
<div class="a cell" style="left:867.00px;top:300.24px">NOK</div>
<div class="a cell" style="left:904.20px;top:300.24px">I/O Server Batch-server</div>
<div class="a cell lnk" style="left:431.00px;top:296.04px;text-decoration:underline;text-underline-offset:0px;text-decoration-thickness:0.8px">ART/#101271</div>
<div class="a cell" style="left:431.00px;top:305.24px">This is for Rental.</div>
<div class="badge t" style="left:8.2px;top:324.87px">4</div>
<div class="a cell lnk" style="left:31.20px;top:324.97px">PRA/100988</div>
<div class="a cell" style="left:89.00px;top:324.97px">2017.06.13</div>
<div class="a cell" style="left:146.20px;top:324.97px">RENTAL</div>
<div class="a cell" style="left:195.20px;top:324.97px">DAY</div>
<div class="a cell" style="left:295.20px;top:324.97px">Rental Price</div>
<div class="a cell lnk" style="left:566.20px;top:324.97px">COP/100383</div>
<div class="a cell lnk" style="left:633.20px;top:324.97px">PRT/100056</div>
<div class="a cell lnk" style="left:692.20px;top:324.97px">CUS/100854</div>
<div class="a cell" style="left:751.20px;top:324.97px">2017.06.13</div>
<div class="a cell" style="left:809.20px;top:324.97px">2018.05.26</div>
<div class="a cell" style="left:867.00px;top:324.97px">NOK</div>
<div class="a cell" style="left:904.20px;top:324.97px">I/O Server Batch-server</div>
<div class="a cell lnk" style="left:431.00px;top:320.77px">ART/#101271</div>
<div class="a cell" style="left:431.00px;top:329.97px">This is for Rental.</div>
<div class="badge t" style="left:8.2px;top:349.60px">4</div>
<div class="a cell lnk" style="left:31.20px;top:349.70px">PRA/100987</div>
<div class="a cell" style="left:89.00px;top:349.70px">2017.06.12</div>
<div class="a cell" style="left:146.20px;top:349.70px">RENTAL</div>
<div class="a cell" style="left:195.20px;top:349.70px">DAY</div>
<div class="a cell" style="left:295.20px;top:349.70px">Rental Price</div>
<div class="a cell lnk" style="left:566.20px;top:349.70px">COP/100382</div>
<div class="a cell lnk" style="left:633.20px;top:349.70px">PRT/100056</div>
<div class="a cell lnk" style="left:692.20px;top:349.70px">CUS/100808</div>
<div class="a cell" style="left:751.20px;top:349.70px">2017.06.12</div>
<div class="a cell" style="left:809.20px;top:349.70px">2018.05.26</div>
<div class="a cell" style="left:867.00px;top:349.70px">NOK</div>
<div class="a cell" style="left:904.20px;top:349.70px">I/O Server Batch-server</div>
<div class="a cell lnk" style="left:431.00px;top:345.50px">ART/#101271</div>
<div class="a cell" style="left:431.00px;top:354.70px">This is for Rental.</div>
<div class="badge t" style="left:8.2px;top:374.32px">4</div>
<div class="a cell lnk" style="left:31.20px;top:374.43px">PRA/100986</div>
<div class="a cell" style="left:89.00px;top:374.43px">2017.06.12</div>
<div class="a cell" style="left:146.20px;top:374.43px">RENTAL</div>
<div class="a cell" style="left:195.20px;top:374.43px">DAY</div>
<div class="a cell" style="left:295.20px;top:374.43px">Rental Price</div>
<div class="a cell lnk" style="left:566.20px;top:374.43px">COP/100381</div>
<div class="a cell lnk" style="left:633.20px;top:374.43px">PRT/100056</div>
<div class="a cell lnk" style="left:692.20px;top:374.43px">CUS/100818</div>
<div class="a cell" style="left:751.20px;top:374.43px">2017.06.12</div>
<div class="a cell" style="left:809.20px;top:374.43px">2018.05.26</div>
<div class="a cell" style="left:867.00px;top:374.43px">NOK</div>
<div class="a cell" style="left:904.20px;top:374.43px">I/O Server Batch-server</div>
<div class="a cell lnk" style="left:431.00px;top:370.23px">ART/#101271</div>
<div class="a cell" style="left:431.00px;top:379.43px">This is for Rental.</div>
<div class="badge t" style="left:8.2px;top:399.06px">4</div>
<div class="a cell lnk" style="left:31.20px;top:399.16px">PRA/100981</div>
<div class="a cell" style="left:89.00px;top:399.16px">2017.06.07</div>
<div class="a cell" style="left:146.20px;top:399.16px">RENTAL</div>
<div class="a cell" style="left:195.20px;top:399.16px">DAY</div>
<div class="a cell" style="left:295.20px;top:399.16px">Rental Price</div>
<div class="a cell lnk" style="left:566.20px;top:399.16px">COP/100378</div>
<div class="a cell lnk" style="left:633.20px;top:399.16px">PRT/100056</div>
<div class="a cell lnk" style="left:692.20px;top:399.16px">CUS/100818</div>
<div class="a cell" style="left:751.20px;top:399.16px">2017.06.07</div>
<div class="a cell" style="left:809.20px;top:399.16px">2018.05.26</div>
<div class="a cell" style="left:867.00px;top:399.16px">NOK</div>
<div class="a cell" style="left:904.20px;top:399.16px">I/O Server Batch-server</div>
<div class="a cell lnk" style="left:431.00px;top:394.96px">ART/#101271</div>
<div class="a cell" style="left:431.00px;top:404.16px">This is for Rental.</div>
<div class="badge g" style="left:8.2px;top:423.79px">8</div>
<div class="a cell lnk" style="left:31.20px;top:423.89px">PRT/100059</div>
<div class="a cell" style="left:89.00px;top:423.89px">2017.06.07</div>
<div class="a cell" style="left:146.20px;top:423.89px">RENTAL</div>
<div class="a cell" style="left:195.20px;top:423.89px">DAY</div>
<div class="a cell" style="left:237.20px;top:423.89px">Standard</div>
<div class="a cell" style="left:295.20px;top:423.89px">Rental Price</div>
<div class="a cell lnk" style="left:566.20px;top:423.89px">ART/#101348</div>
<div class="a cell" style="left:751.20px;top:423.89px">2017.06.07</div>
<div class="a cell" style="left:867.00px;top:423.89px">NOK</div>
<div class="a cell" style="left:904.20px;top:423.89px">SYSTEMCONSULTANT 8786</div>
<div class="a cell lnk" style="left:431.00px;top:419.69px">ART/#101348</div>
<div class="a cell" style="left:431.00px;top:428.89px">Rental testing</div>
<div class="a" style="left:5px;top:442.95px;width:1014px;height:24.65px;background:linear-gradient(#eeeeee,#e3e3e3);border-top:1px solid #d2d2d2"></div>
<div class="a pos" style="left:903.80px;top:447.10px">Position 1 of 230</div>
<div class="btn" style="left:970.6px;top:447.4px"></div>
<div class="btn" style="left:993.4px;top:447.4px;width:19.6px"></div>
<svg class="a" style="left:977px;top:451.5px" width="6" height="8"><path d="M4.8 1.2 L1.0 4 L4.8 6.8Z" fill="#333"/></svg>
<svg class="a" style="left:1000px;top:451.5px" width="6" height="8"><path d="M1.2 1.2 L5.0 4 L1.2 6.8Z" fill="#333"/></svg>
<div class="radio" style="left:5.70px;top:468.2px"></div>
<div class="a rl" style="left:20.50px;top:467.70px">All</div>
<div class="radio" style="left:174.60px;top:468.2px"></div>
<div class="a" style="left:178.80px;top:472.2px;width:4px;height:4px;border-radius:50%;background:#3a3a3a"></div>
<div class="a rl" style="left:189.40px;top:467.70px">Active</div>
<div class="radio" style="left:343.50px;top:468.2px"></div>
<div class="a rl" style="left:358.30px;top:467.70px">Open</div>
<div class="radio" style="left:512.40px;top:468.2px"></div>
<div class="a rl" style="left:527.20px;top:467.70px">Flagged</div>
<div class="radio" style="left:681.30px;top:468.2px"></div>
<div class="a rl" style="left:696.10px;top:467.70px">Discontinued</div>
<div class="radio" style="left:850.20px;top:468.2px"></div>
<div class="a rl" style="left:865.00px;top:467.70px">Discarded</div>
</body></html>
